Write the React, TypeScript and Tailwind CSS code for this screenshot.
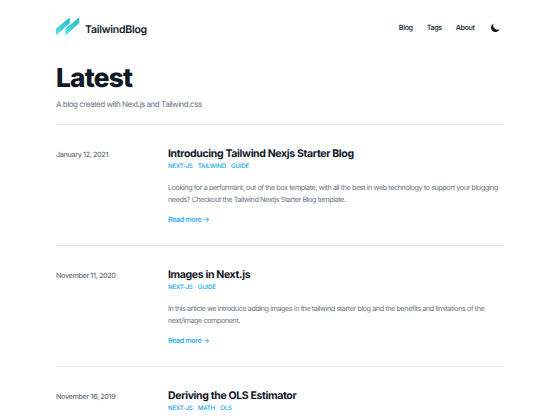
type Post = { date: string; title: string; tags: string[]; lines: string[] };

const posts: Post[] = [
  { date: 'January 12, 2021', title: 'Introducing Tailwind Nexjs Starter Blog', tags: ['NEXT-JS', 'TAILWIND', 'GUIDE'], lines: ['Looking for a performant, out of the box template, with all the best in web technology to support your blogging', 'needs? Checkout the Tailwind Nextjs Starter Blog template.'] },
  { date: 'November 11, 2020', title: 'Images in Next.js', tags: ['NEXT-JS', 'GUIDE'], lines: ['In this article we introduce adding images in the tailwind starter blog and the benefits and limitations of the', 'next/image component.'] },
  { date: 'November 16, 2019', title: 'Deriving the OLS Estimator', tags: ['NEXT-JS', 'MATH', 'OLS'], lines: [] },
];

function Logo() {
  return (
    <svg width="24" height="20" viewBox="0 0 24 20" className="shrink-0">
      <defs>
        <linearGradient id="logo-fill" x1="0" y1="0" x2="0" y2="1">
          <stop offset="0" stopColor="#1fb5c9" />
          <stop offset="1" stopColor="#5ce3f2" />
        </linearGradient>
      </defs>
      <path d="M0 11.8 13.8 0.3v6L0 18.5Z M9.5 11.8 23.2 0.3v6L9.5 18.5Z" fill="url(#logo-fill)" />
    </svg>
  );
}

export default function App() {
  return (
    <div className="h-[420px] w-[560px] overflow-hidden bg-white px-14 font-['Inter',sans-serif] text-[#111827] [text-rendering:geometricPrecision]">
      <header className="flex h-[54px] items-center justify-between">
        <div className="flex items-center gap-[5px]">
          <Logo />
          <span className="mt-[5px] text-[10.5px] leading-4 font-semibold tracking-[-0.25px]">TailwindBlog</span>
        </div>
        <nav className="flex items-center gap-[14px] pt-[2px] text-[7.2px] font-medium tracking-[-0.38px]">
          <a>Blog</a><a>Tags</a><a>About</a>
          <svg width="9" height="9" viewBox="2 2 16 16" className="mr-[4.5px] ml-[2px]" fill="#111827"><path d="M17.293 13.293A8 8 0 016.707 2.707a8.001 8.001 0 1010.586 10.586z" /></svg>
        </nav>
      </header>
      <div className="h-[71px] border-b border-gray-200 pt-[11px]">
        <h1 className="text-[26.25px] leading-[28px] font-extrabold tracking-[-0.78px]">Latest</h1>
        <p className="mt-[4px] text-[8px] leading-[14px] tracking-[-0.48px] text-[#6b7280]">A blog created with Next.js and Tailwind.css</p>
      </div>
      <main>
        {posts.map((p) => (
          <article key={p.title} className="flex h-[121px] border-b border-gray-200 pt-[21px]">
            <time className="w-28 shrink-0 pt-[2px] text-[7.2px] leading-[14px] font-medium tracking-[-0.36px] text-[#6b7280]">{p.date}</time>
            <div className="whitespace-nowrap">
              <h2 className="pt-px text-[10.5px] leading-[14px] font-bold tracking-[-0.35px]">{p.title}</h2>
              <div className="flex h-[10px] gap-[5.25px] pt-px text-[6.125px] leading-[10px] font-medium tracking-[-0.2px] text-[#0ea5e9]">{p.tags.map((t) => <a key={t}>{t}</a>)}</div>
              {p.lines.length > 0 && (
                <>
                  <div className="mt-[11px] text-[7.2px] leading-[12px] tracking-[-0.405px] text-[#6b7280]">{p.lines.map((l) => <p key={l}>{l}</p>)}</div>
                  <a className="mt-[8px] block text-[7.2px] leading-[12px] font-medium tracking-[-0.4px] text-[#0ea5e9]">Read more →</a>
                </>
              )}
            </div>
          </article>
        ))}
      </main>
    </div>
  );
}
